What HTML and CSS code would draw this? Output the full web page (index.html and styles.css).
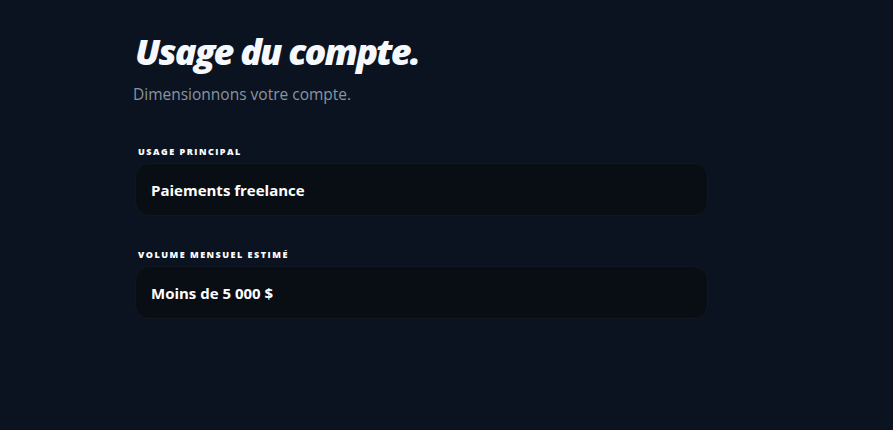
FILE: index.html
```html
<!DOCTYPE html>
<html lang="fr">
<head>
<meta charset="utf-8">
<link rel="stylesheet" href="styles.css">
</head>
<body>
<main class="page">
  <h1 class="title">Usage du compte.</h1>
  <p class="subtitle">Dimensionnons votre compte.</p>
  <div class="field">
    <div class="label">USAGE PRINCIPAL</div>
    <div class="box">Paiements freelance</div>
  </div>
  <div class="field">
    <div class="label">VOLUME MENSUEL ESTIMÉ</div>
    <div class="box">Moins de 5 000 $</div>
  </div>
</main>
</body>
</html>
```
FILE: styles.css
```css
html, body {
  margin: 0;
  padding: 0;
  background: #0b1320;
  height: 100%;
}
body {
  font-family: "Open Sans", "Noto Sans", sans-serif;
  color: #f4f7fb;
}
.page {
  width: 573px;
  margin-left: 135px;
  padding-top: 28px;
}
.title {
  margin: 0;
  font-size: 36px;
  font-weight: 800;
  font-style: italic;
  letter-spacing: -1.8px;
  line-height: 48px;
  color: #f5f8fc;
}
.subtitle {
  margin: 8px 0 0 -2px;
  font-size: 15.5px;
  line-height: 20px;
  color: #8a94a3;
}
.field {
  margin-top: 42px;
}
.field + .field {
  margin-top: 33px;
}
.label {
  padding-left: 3px;
  font-size: 9px;
  font-weight: 800;
  letter-spacing: 1.5px;
  line-height: 12px;
  color: #ffffff;
  margin-bottom: 5px;
}
.box {
  box-sizing: border-box;
  height: 53px;
  background: #090d14;
  border: 1px solid #121822;
  border-radius: 14px;
  padding: 0 15px;
  display: flex;
  align-items: center;
  font-size: 15px;
  font-weight: 700;
  color: #ffffff;
}
```
